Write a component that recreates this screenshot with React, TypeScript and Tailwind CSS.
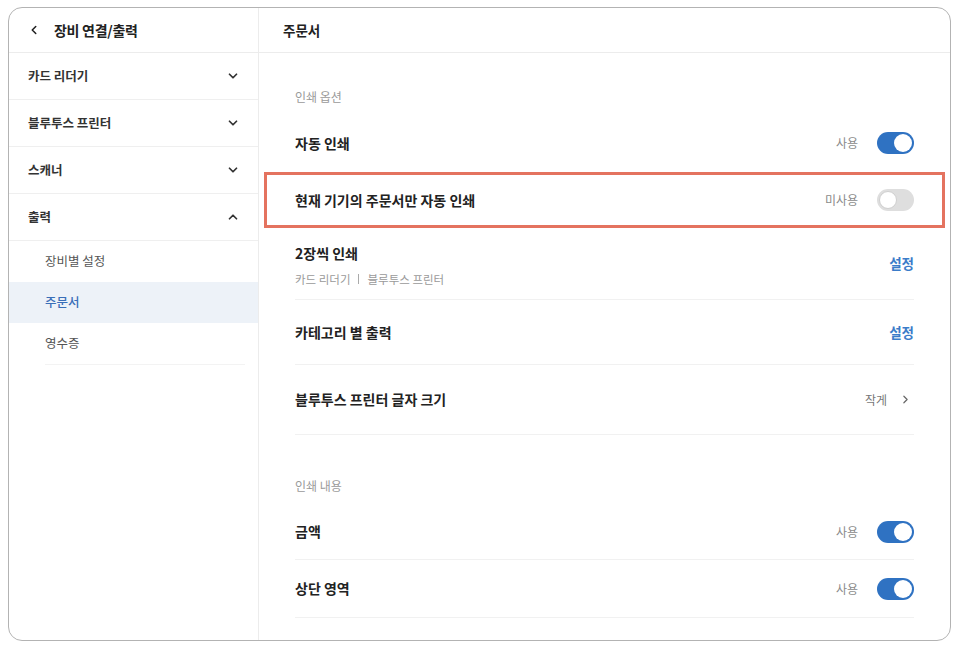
import { ChevronDown, ChevronLeft, ChevronRight, ChevronUp } from "lucide-react";

const sideItems = [
  { label: "카드 리더기", open: false },
  { label: "블루투스 프린터", open: false },
  { label: "스캐너", open: false },
  { label: "출력", open: true },
];

const subItems = [
  { label: "장비별 설정", active: false },
  { label: "주문서", active: true },
  { label: "영수증", active: false },
];

function Toggle({ on }: { on: boolean }) {
  return (
    <div
      className={`w-[37px] h-[22px] rounded-full p-[2px] flex ${
        on ? "bg-[#2f72c2] justify-end" : "bg-[#dedede] justify-start"
      }`}
    >
      <div
        className={`w-[18px] h-[18px] rounded-full bg-white ${
          on ? "" : "border border-[#cfcfcf]"
        }`}
      />
    </div>
  );
}

function Status({ label, on }: { label: string; on: boolean }) {
  return (
    <div className="flex items-center gap-[19px]">
      <span className="text-[12px] text-[#8a8a8a]">{label}</span>
      <Toggle on={on} />
    </div>
  );
}

export default function App() {
  return (
    <div
      className="w-[958px] h-[652px] bg-white pt-[7px] pl-[8px]"
      style={{ fontFamily: '"Noto Sans CJK KR", "Noto Sans", sans-serif' }}
    >
      <div className="w-[943px] h-[634px] border border-[#b3b3b3] rounded-[14px] overflow-hidden flex">
        {/* sidebar */}
        <aside className="w-[250px] h-full border-r border-[#ececec] flex flex-col">
          <div className="h-[45px] border-b border-[#ececec] flex items-center pl-[18px] gap-[13px] shrink-0">
            <ChevronLeft size={14} strokeWidth={2.6} className="text-[#222]" />
            <span className="text-[14px] font-bold text-[#222] tracking-[-0.02em]">
              장비 연결/출력
            </span>
          </div>
          {sideItems.map((item) => (
            <div
              key={item.label}
              className="h-[47px] border-b border-[#efefef] flex items-center justify-between pl-[19px] pr-[18px] shrink-0"
            >
              <span className="text-[12.5px] font-semibold text-[#333]">
                {item.label}
              </span>
              {item.open ? (
                <ChevronUp size={14} strokeWidth={3} className="text-[#333]" />
              ) : (
                <ChevronDown size={14} strokeWidth={3} className="text-[#333]" />
              )}
            </div>
          ))}
          {subItems.map((item) => (
            <div
              key={item.label}
              className={`h-[41px] flex items-center pl-[36px] shrink-0 ${
                item.active ? "bg-[#edf2f8]" : ""
              }`}
            >
              <span
                className={`text-[12.5px] ${
                  item.active ? "text-[#3a6fb8] font-medium" : "text-[#555]"
                }`}
              >
                {item.label}
              </span>
            </div>
          ))}
          <div className="ml-[36px] mr-[13px] border-b border-[#f3f3f3]" />
        </aside>

        {/* main */}
        <main className="flex-1 h-full flex flex-col">
          <div className="h-[45px] border-b border-[#ececec] flex items-center pl-[24px] shrink-0">
            <span className="text-[13.5px] font-bold text-[#222]">주문서</span>
          </div>
          <div className="px-9 flex flex-col">
            <div className="h-[61px] flex items-end pb-[8px]">
              <span className="text-[12px] text-[#9a9a9a]">인쇄 옵션</span>
            </div>
            <div className="h-[58px] flex items-center justify-between">
              <span className="text-[14px] font-bold text-[#222]">자동 인쇄</span>
              <Status label="사용" on />
            </div>
            <div className="h-[56px] -mx-[31px] px-[28px] border-[3px] border-[#e4735f] flex items-center justify-between">
              <span className="text-[14px] font-bold text-[#222]">
                현재 기기의 주문서만 자동 인쇄
              </span>
              <Status label="미사용" on={false} />
            </div>
            <div className="h-[72px] border-b border-[#f1f1f1] flex items-center justify-between">
              <div className="flex flex-col gap-[10px] mt-[3px]">
                <span className="text-[14px] font-bold text-[#222] leading-[18px]">
                  2장씩 인쇄
                </span>
                <span className="text-[11.5px] text-[#9a9a9a] leading-[15px] flex items-center gap-[8px]">
                  <span>카드 리더기</span>
                  <span className="w-px h-[10px] bg-[#aaa]" />
                  <span>블루투스 프린터</span>
                </span>
              </div>
              <span className="text-[13.5px] font-semibold text-[#3b7cc9]">설정</span>
            </div>
            <div className="h-[65px] border-b border-[#f1f1f1] flex items-center justify-between">
              <span className="text-[14px] font-bold text-[#222]">카테고리 별 출력</span>
              <span className="text-[13.5px] font-semibold text-[#3b7cc9]">설정</span>
            </div>
            <div className="h-[70px] border-b border-[#f1f1f1] flex items-center justify-between">
              <span className="text-[14px] font-bold text-[#222]">
                블루투스 프린터 글자 크기
              </span>
              <div className="flex items-center gap-[12px]">
                <span className="text-[12px] text-[#777]">작게</span>
                <ChevronRight size={13} strokeWidth={2.2} className="text-[#666] mr-[2px]" />
              </div>
            </div>
            <div className="h-[69px] flex items-end pb-[9px]">
              <span className="text-[12px] text-[#9a9a9a]">인쇄 내용</span>
            </div>
            <div className="h-[56px] border-b border-[#f1f1f1] flex items-center justify-between">
              <span className="text-[14px] font-bold text-[#222]">금액</span>
              <Status label="사용" on />
            </div>
            <div className="h-[58px] border-b border-[#f1f1f1] flex items-center justify-between">
              <span className="text-[14px] font-bold text-[#222]">상단 영역</span>
              <Status label="사용" on />
            </div>
          </div>
        </main>
      </div>
    </div>
  );
}
